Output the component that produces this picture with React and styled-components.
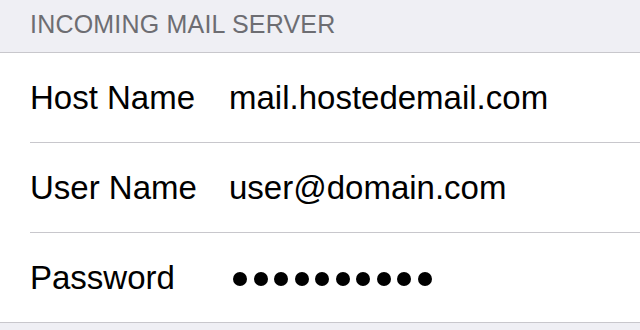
import React from 'react'
import styled, { createGlobalStyle } from 'styled-components'

const GlobalStyle = createGlobalStyle`
    body {
        margin: 0;
        background: #efeff4;
        font-family: "Liberation Sans", Arial, sans-serif;
    }
`

const Page = styled.div`
    width: 640px;
    height: 330px;
    background: #efeff4;
    overflow: hidden;
`

const SectionHeader = styled.div`
    height: 53px;
    box-sizing: border-box;
    padding: 10px 0 0 30px;
    font-size: 25px;
    line-height: 29px;
    letter-spacing: 0.2px;
    color: #6d6d72;
    border-bottom: 1px solid #c8c7cc;
`

const Group = styled.div`
    background: #fff;
    border-bottom: 1px solid #c8c7cc;
    padding-left: 30px;
`

const Row = styled.div`
    height: 89px;
    display: grid;
    grid-template-columns: 199px 1fr;
    align-items: center;
    font-size: 33px;
    color: #000;
    border-bottom: ${p => (p.last ? 'none' : '1px solid #c8c7cc')};
`

const Label = styled.span``

const Value = styled.span`
    white-space: nowrap;
`

const Dots = styled.div`
    display: flex;
    align-items: center;
    gap: 6.5px;
    padding-left: 4px;
    margin-top: 2px;
`

const Dot = styled.span`
    width: 14px;
    height: 14px;
    border-radius: 50%;
    background: #000;
`

const fields = [
    { label: 'Host Name', value: 'mail.hostedemail.com' },
    { label: 'User Name', value: 'user@domain.com' },
]

const App = () => {
    return (
        <Page>
            <GlobalStyle />
            <SectionHeader>INCOMING MAIL SERVER</SectionHeader>
            <Group>
                {fields.map(f => (
                    <Row key={f.label}>
                        <Label>{f.label}</Label>
                        <Value>{f.value}</Value>
                    </Row>
                ))}
                <Row last>
                    <Label>Password</Label>
                    <Dots aria-label="password">
                        {Array.from({ length: 10 }).map((_, i) => <Dot key={i} />)}
                    </Dots>
                </Row>
            </Group>
        </Page>
    )
}

export default App
